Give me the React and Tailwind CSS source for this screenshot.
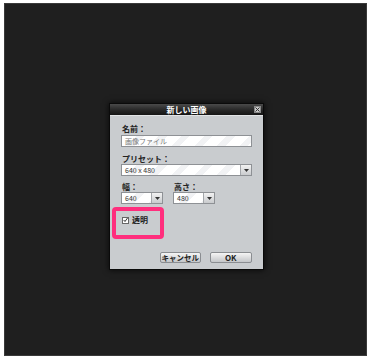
import React from "react";

const jp = { fontFamily: '"Noto Sans CJK JP", "Liberation Sans", sans-serif' };

function Arrow() {
  return (
    <div className="w-[11px] h-full flex items-center justify-center border-l border-[#a4a7ab] bg-gradient-to-b from-[#f2f2f2] to-[#c9cbce]">
      <svg width="5" height="3" viewBox="0 0 5 3"><path d="M0 0h5L2.5 3z" fill="#333" /></svg>
    </div>
  );
}

function Field({ value, arrow, className, textColor = "text-[#333]" }) {
  return (
    <div className={`h-[12px] flex items-stretch border border-[#8e9195] bg-[repeating-linear-gradient(135deg,#ffffff_0px,#ffffff_10px,#f1f2f4_10px,#f1f2f4_16px)] ${className}`}>
      <div className={`flex-1 pl-[3px] flex items-center text-[7px] leading-none ${textColor}`}>{value}</div>
      {arrow && <Arrow />}
    </div>
  );
}

export default function App() {
  return (
    <div className="w-[371px] h-[360px] bg-white pt-[3px] pl-[4px]" style={jp}>
      <div className="w-[363px] h-[353px] bg-[#1f1f1f] border border-[#3a3a3a] pl-[104px] pt-[99px]">
        <div className="w-[155px] h-[167px] border border-[#0a0a0a] shadow-[0_0_6px_rgba(0,0,0,0.8)] flex flex-col">
          <div className="h-[11px] bg-gradient-to-b from-[#4a4a4a] via-[#2a2a2a] to-[#151515] relative flex items-center justify-center">
            <span className="text-white text-[8px] font-bold leading-none">新しい画像</span>
            <div className="absolute right-[2px] top-[2px] w-[7px] h-[7px] bg-[#c8c8c8] border border-[#888] flex items-center justify-center">
              <svg width="5" height="5" viewBox="0 0 5 5"><path d="M0.5 0.5L4.5 4.5M4.5 0.5L0.5 4.5" stroke="#333" strokeWidth="1" /></svg>
            </div>
          </div>
          <div className="flex-1 bg-[#c9cccf] border-t border-[#e2e4e6] pl-[11px] pr-[11px] pt-[8px] flex flex-col">
            <div className="h-[10px] text-[8px] font-bold leading-[10px] text-[#222] pl-[1px]">名前：</div>
            <Field value="画像ファイル" className="mt-[1px] w-[131px]" textColor="text-[#777]" />
            <div className="h-[10px] mt-[7px] text-[8px] font-bold leading-[10px] text-[#222] pl-[1px]">プリセット：</div>
            <Field value="640 x 480" arrow className="w-[131px]" />
            <div className="mt-[6px] flex gap-[10px]">
              <div className="flex flex-col">
                <div className="h-[10px] text-[8px] font-bold leading-[10px] text-[#222] pl-[1px]">幅：</div>
                <Field value="640" arrow className="w-[42px]" />
              </div>
              <div className="flex flex-col">
                <div className="h-[10px] text-[8px] font-bold leading-[10px] text-[#222] pl-[1px]">高さ：</div>
                <Field value="480" arrow className="w-[42px]" />
              </div>
            </div>
            <div className="mt-[3px] -ml-[9px] w-[52px] h-[32px] border-[4px] border-[#ff2e7d] rounded-[4px] pl-[6px] pt-[5px]">
              <div className="flex items-center gap-[3px]">
                <div className="w-[7px] h-[7px] bg-white border border-[#666] flex items-center justify-center">
                  <svg width="6" height="6" viewBox="0 0 6 6"><path d="M0.8 3L2.4 4.8L5.4 0.6" stroke="#222" strokeWidth="1.1" fill="none" /></svg>
                </div>
                <span className="text-[8px] font-bold leading-none text-[#222]">透明</span>
              </div>
            </div>
            <div className="mt-[13px] flex gap-[9px] pl-[39px]">
              <div className="w-[43px] h-[11px] border border-[#8a8d91] rounded-[2px] bg-gradient-to-b from-[#f5f5f5] to-[#c4c6c9] flex items-center justify-center text-[7.5px] font-bold leading-none text-[#222]">キャンセル</div>
              <div className="w-[45px] h-[11px] border border-[#8a8d91] rounded-[2px] bg-gradient-to-b from-[#f5f5f5] to-[#c4c6c9] flex items-center justify-center text-[8px] font-bold leading-none text-[#222]">OK</div>
            </div>
          </div>
        </div>
      </div>
    </div>
  );
}
